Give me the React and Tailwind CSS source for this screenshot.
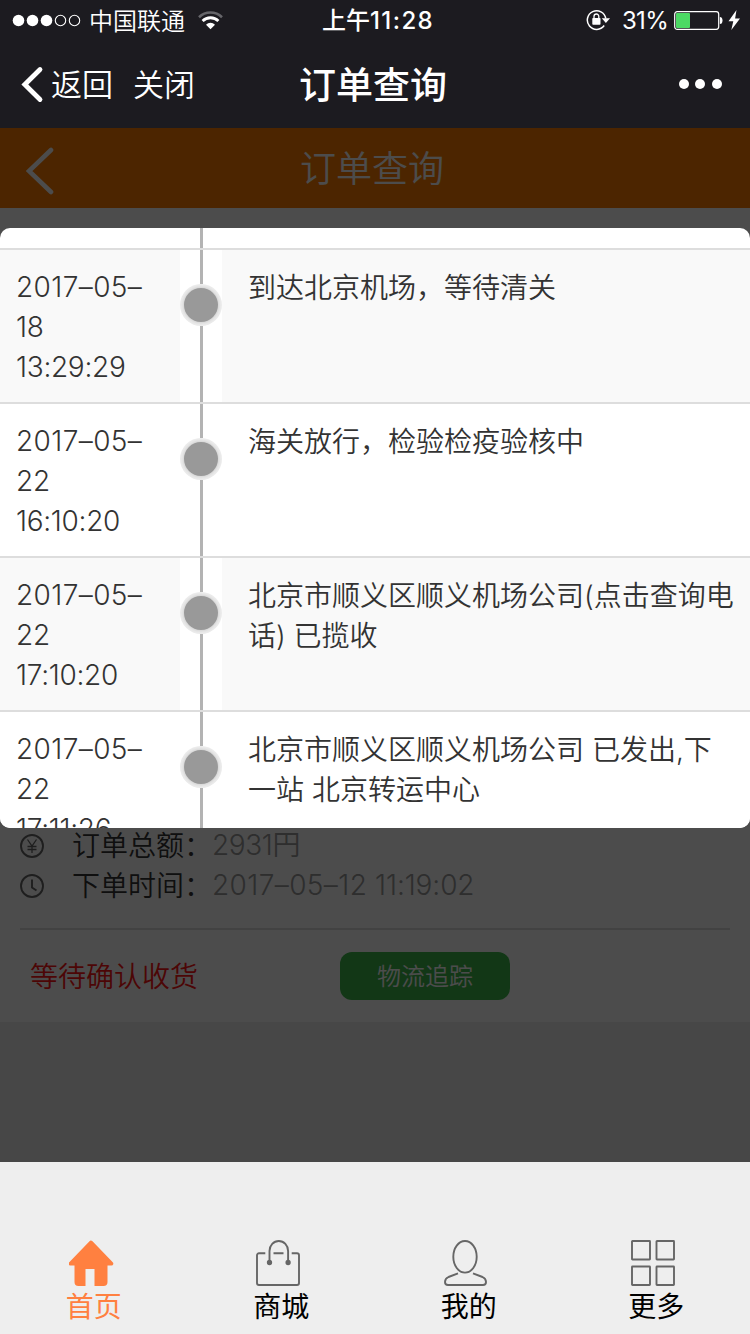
import React from 'react';

const tracks = [
  { month: '2017–05–', day: '18', time: '13:29:29', text: '到达北京机场，等待清关' },
  { month: '2017–05–', day: '22', time: '16:10:20', text: '海关放行，检验检疫验核中' },
  { month: '2017–05–', day: '22', time: '17:10:20', text: '北京市顺义区顺义机场公司(点击查询电话) 已揽收' },
  { month: '2017–05–', day: '22', time: '17:11:26', text: '北京市顺义区顺义机场公司 已发出,下一站 北京转运中心' },
];

const StatusBar = () => (
  <div className="flex h-10 items-center text-2xl leading-10">
    <svg className="ml-3 shrink-0" width="70" height="14" viewBox="0 0 70 14">
      <g fill="#fff">
        <circle cx="6.5" cy="7.5" r="5.8" />
        <circle cx="20.5" cy="7.5" r="5.8" />
        <circle cx="34.5" cy="7.5" r="5.8" />
      </g>
      <g fill="none" stroke="#fff" strokeWidth="1.1">
        <circle cx="48.5" cy="7.5" r="5.2" />
        <circle cx="62.5" cy="7.5" r="5.2" />
      </g>
    </svg>
    <span className="ml-[7px] w-[97px] whitespace-nowrap pt-[3px] font-[350]">中国联通</span>
    <svg className="ml-[12px] shrink-0" width="25" height="19" viewBox="0 0 25 19" fill="none">
      <path d="M1 6.2A16.5 16.5 0 0 1 24 6.2" stroke="#66666a" strokeWidth="2.6" />
      <path d="M4.6 10A11.2 11.2 0 0 1 20.4 10" stroke="#fff" strokeWidth="2.8" />
      <path d="M8 13.7A6.4 6.4 0 0 1 17 13.7L12.5 18.3Z" fill="#fff" />
    </svg>
    <span className="ml-[99px] w-[112px] whitespace-nowrap pt-[2px] font-medium">上午<span className="tracking-[1.4px]">11:28</span></span>
    <svg className="ml-[152px] shrink-0" width="24" height="22" viewBox="0 0 24 22" fill="none">
      <path d="M18.2 16.5A9.3 9.3 0 1 1 19.8 9.5" stroke="#fff" strokeWidth="1.5" />
      <path d="M15.8 9.3H24L19.9 14Z" fill="#fff" />
      <rect x="6.3" y="9" width="8.2" height="6.7" rx="0.8" fill="#fff" />
      <path d="M8 9.5V7.4a2.4 2.4 0 0 1 4.8 0V9.5" stroke="#fff" strokeWidth="1.3" />
    </svg>
    <span className="ml-[12px] w-[46px] whitespace-nowrap pt-[2px] tracking-[-0.7px]">31%</span>
    <svg className="ml-[6px] shrink-0" width="68" height="22" viewBox="0 0 68 22">
      <rect x="0.7" y="2.7" width="44" height="17.6" rx="2.5" fill="none" stroke="#fff" strokeWidth="1.2" />
      <rect x="2" y="4" width="14" height="15" rx="1" fill="#4cd964" />
      <path d="M45.9 8a2.6 3.5 0 0 1 0 7z" fill="#fff" />
      <path d="M62.5 1L54.500 12.300h4.800L57.300 21L66 9.500h-4.900z" fill="#fff" />
    </svg>
  </div>
);

const NavBar = () => (
  <div className="flex h-[88px] items-center">
    <svg className="ml-[20px] shrink-0" width="24" height="38" viewBox="0 0 24 38">
      <path d="M20 4.5L4.8 19.5L20 34.5" fill="none" stroke="#fff" strokeWidth="4.8" strokeLinecap="round" />
    </svg>
    <span className="ml-[7px] w-[82px] pt-[3px] text-[31px] font-[350]">返回</span>
    <span className="w-[166px] pt-[3px] text-[31px] font-[350]">关闭</span>
    <span className="w-[380px] pt-1 text-[37px] font-medium">订单查询</span>
    <svg className="shrink-0" width="44" height="12" viewBox="0 0 44 12" fill="#fff">
      <circle cx="5" cy="6" r="5" />
      <circle cx="21" cy="6" r="5" />
      <circle cx="38" cy="6" r="5" />
    </svg>
  </div>
);

const TrackRow = ({ item, striped }) => (
  <div className="flex h-[154px] border-t-2 border-[#ddd] text-[28px] font-[350] leading-10 text-[#333]">
    <div className={`w-[180px] shrink-0 whitespace-nowrap pl-4 pt-[17px] tracking-[-0.3px] ${striped ? 'bg-[#f9f9f9]' : 'bg-white'}`}>
      <span className="tracking-[0.4px]">{item.month}</span><br />{item.day}<br />{item.time}
    </div>
    <div className="flex w-[42px] shrink-0 flex-col items-center bg-white">
      <div className="h-[34px] w-[3px] bg-[#b3b3b3]" />
      <div className="flex h-[42px] w-[42px] shrink-0 items-center justify-center rounded-full bg-[#ececec]">
        <div className="h-[34px] w-[34px] rounded-full bg-[#999] shadow-[0_0_3px_1px_#d0d0d0]" />
      </div>
      <div className="w-[3px] flex-1 bg-[#b3b3b3]" />
    </div>
    <div className={`flex-1 pl-[26px] pr-[14px] pt-[18px] ${striped ? 'bg-[#f9f9f9]' : 'bg-white'}`}>{item.text}</div>
  </div>
);

const OrderLine = ({ icon, label, children }) => (
  <div className="flex h-10 items-center pl-5 text-[28px] font-[350] leading-10">
    <svg className="shrink-0" width="24" height="24" viewBox="0 0 24 24" fill="none" stroke="#666" strokeWidth="1.9">
      <circle cx="12" cy="12" r="11" />
      {icon}
    </svg>
    <span className="ml-[28px] w-[140px] whitespace-nowrap pb-px text-[#333]">{label}</span>
    <span className="whitespace-nowrap pb-[2px] text-[#999]">{children}</span>
  </div>
);

const tabs = [
  {
    name: '首页',
    active: true,
    icon: <path d="M21 0.8L0.5 22a2 2 0 0 0 1.2 3.6H5.5V42q0 4 4 4h7V29h9v17h9q4 0 4-4V25.6h4A2 2 0 0 0 43.5 22L23.5 1.2Q22 -0.2 21 0.8Z" fill="#ff8040" />,
  },
  {
    name: '商城',
    icon: (
      <g fill="none" stroke="#666" strokeWidth="1.9">
        <path d="M9.3 13.3H3a2 2 0 0 0-2 2V43a2 2 0 0 0 2 2H41a2 2 0 0 0 2-2V15.3a2 2 0 0 0-2-2H35.7M17.5 13.3H27.5" />
        <path d="M13.5 22V11a9.3 10 0 0 1 18.6 0V22" />
        <circle cx="13.5" cy="22.5" r="1.7" fill="#666" />
        <circle cx="32.1" cy="22.5" r="1.7" fill="#666" />
      </g>
    ),
  },
  {
    name: '我的',
    icon: (
      <g fill="none" stroke="#666" strokeWidth="1.9">
        <ellipse cx="21" cy="16.8" rx="11.7" ry="15.8" />
        <path d="M14 33.3L4.5 37Q1 38.5 1 42q0 3 3 3H39q3 0 3-3 0-3.5-3.5-5L29 33.3" />
      </g>
    ),
  },
  {
    name: '更多',
    icon: (
      <g fill="none" stroke="#666" strokeWidth="1.9">
        <rect x="1" y="1" width="18" height="18.5" rx="0.5" />
        <rect x="25.5" y="1" width="17.5" height="18.5" rx="0.5" />
        <rect x="1" y="26.5" width="18" height="18.5" rx="0.5" />
        <rect x="25.5" y="26.5" width="17.5" height="18.5" rx="0.5" />
      </g>
    ),
  },
];

const TabBar = () => (
  <div className="grid h-[172px] grid-cols-4 bg-[#eee] pt-[78px]">
    {tabs.map((tab) => (
      <div key={tab.name} className={`flex flex-col items-center text-[28px] leading-10 ${tab.active ? 'text-[#ff8040]' : 'text-black'}`}>
        <svg className="mr-[5px] shrink-0" width="45" height="46" viewBox="0 0 45 46">{tab.icon}</svg>
        <span className="pt-px">{tab.name}</span>
      </div>
    ))}
  </div>
);

export default function App() {
  return (
    <div className="h-[1334px] w-[750px] overflow-hidden bg-[#eee] font-[Inter,'Noto_Sans_CJK_SC',sans-serif]">
      <header className="h-32 bg-[#1c1b20] text-white">
        <StatusBar />
        <NavBar />
      </header>

      <main className="relative h-[1034px]">
        <div className="flex h-20 items-center bg-[#ff7d00] text-white">
          <svg className="ml-[26px] mt-[6px] shrink-0" width="28" height="48" viewBox="0 0 28 48">
            <path d="M25 3L3 24L25 45" fill="none" stroke="#fff" strokeWidth="4.6" strokeLinecap="round" />
          </svg>
          <span className="ml-[246px] pt-[2px] text-4xl font-[350]">订单查询</span>
        </div>
        <div className="flex h-[814px] flex-col justify-end bg-white">
          <OrderLine
            label="订单总额："
            icon={<path d="M7.5 5.5L12 12L16.5 5.5M12 12V19M7.5 12.5H16.5M7.5 15.5H16.5" strokeWidth="1.3" />}
          >
            <span className="tracking-[-0.4px]">2931円</span>
          </OrderLine>
          <OrderLine label="下单时间：" icon={<path d="M12 5.5V13.5L16.5 16.5" />}>
            <span className="tracking-[0.4px]">2017–05–12</span>
            <span className="tracking-[-0.1px]"> 11:19:02</span>
          </OrderLine>
          <div className="mx-5 mt-[22px] border-t-2 border-[#dcdcdc]" />
          <div className="flex h-[92px] items-center">
            <span className="ml-[30px] w-[310px] pt-[2px] text-[28px] font-[350] text-[#ff1414]">等待确认收货</span>
            <button className="h-12 w-[170px] rounded-xl bg-[#3cb74a] pt-[2px] text-2xl font-[350] text-white">物流追踪</button>
          </div>
        </div>

        {/* logistics popup */}
        <div className="absolute inset-0 bg-black/70 pt-[100px]">
          <div className="h-[600px] overflow-hidden rounded-[10px] bg-white">
            <div className="flex h-5 justify-center pr-[348px]">
              <div className="w-[3px] bg-[#b3b3b3]" />
            </div>
            {tracks.map((item, i) => (
              <TrackRow key={item.time} item={item} striped={i % 2 === 0} />
            ))}
          </div>
        </div>
      </main>

      <TabBar />
    </div>
  );
}
